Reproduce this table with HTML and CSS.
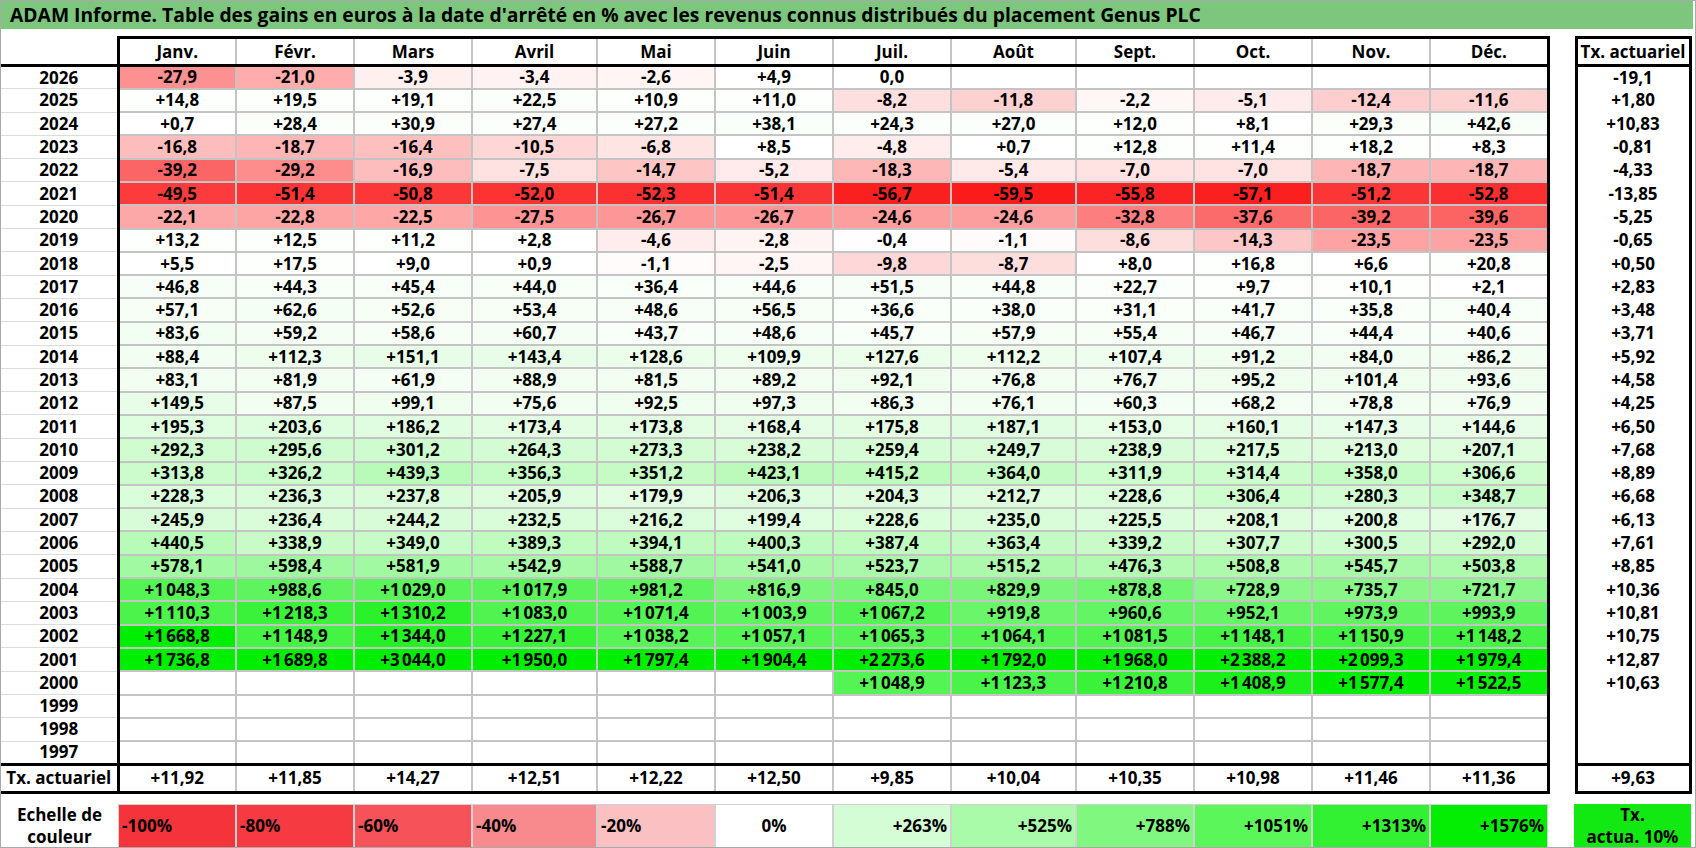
FILE: index.html
```html
<!DOCTYPE html>
<html lang="fr">
<head>
<meta charset="utf-8">
<title>ADAM Informe - Genus PLC</title>
<link rel="stylesheet" href="styles.css">
</head>
<body>
<div class="page">
  <div class="title">ADAM Informe. Table des gains en euros à la date d'arrêté en % avec les revenus connus distribués du placement Genus PLC</div>
  <div class="tables">
    <table class="grid" id="grid">
      <colgroup>
        <col class="c-label"><col class="c-m"><col class="c-m"><col class="c-m"><col class="c-w"><col class="c-m"><col class="c-m"><col class="c-m"><col class="c-w"><col class="c-m"><col class="c-m"><col class="c-m"><col class="c-m">
      </colgroup>
      <thead>
        <tr><th class="corner"></th><th>Janv.</th><th>Févr.</th><th>Mars</th><th>Avril</th><th>Mai</th><th>Juin</th><th>Juil.</th><th>Août</th><th>Sept.</th><th>Oct.</th><th>Nov.</th><th>Déc.</th></tr>
      </thead>
      <tbody>
        <tr><th>2026</th><td>-27,9</td><td class="sel">-21,0</td><td>-3,9</td><td>-3,4</td><td>-2,6</td><td>+4,9</td><td>0,0</td><td></td><td></td><td></td><td></td><td></td></tr>
        <tr><th>2025</th><td>+14,8</td><td>+19,5</td><td>+19,1</td><td>+22,5</td><td>+10,9</td><td>+11,0</td><td>-8,2</td><td>-11,8</td><td>-2,2</td><td>-5,1</td><td>-12,4</td><td>-11,6</td></tr>
        <tr><th>2024</th><td>+0,7</td><td>+28,4</td><td>+30,9</td><td>+27,4</td><td>+27,2</td><td>+38,1</td><td>+24,3</td><td>+27,0</td><td>+12,0</td><td>+8,1</td><td>+29,3</td><td>+42,6</td></tr>
        <tr><th>2023</th><td>-16,8</td><td>-18,7</td><td>-16,4</td><td>-10,5</td><td>-6,8</td><td>+8,5</td><td>-4,8</td><td>+0,7</td><td>+12,8</td><td>+11,4</td><td>+18,2</td><td>+8,3</td></tr>
        <tr><th>2022</th><td>-39,2</td><td>-29,2</td><td>-16,9</td><td>-7,5</td><td>-14,7</td><td>-5,2</td><td>-18,3</td><td>-5,4</td><td>-7,0</td><td>-7,0</td><td>-18,7</td><td>-18,7</td></tr>
        <tr><th>2021</th><td>-49,5</td><td>-51,4</td><td>-50,8</td><td>-52,0</td><td>-52,3</td><td>-51,4</td><td>-56,7</td><td>-59,5</td><td>-55,8</td><td>-57,1</td><td>-51,2</td><td>-52,8</td></tr>
        <tr><th>2020</th><td>-22,1</td><td>-22,8</td><td>-22,5</td><td>-27,5</td><td>-26,7</td><td>-26,7</td><td>-24,6</td><td>-24,6</td><td>-32,8</td><td>-37,6</td><td>-39,2</td><td>-39,6</td></tr>
        <tr><th>2019</th><td>+13,2</td><td>+12,5</td><td>+11,2</td><td>+2,8</td><td>-4,6</td><td>-2,8</td><td>-0,4</td><td>-1,1</td><td>-8,6</td><td>-14,3</td><td>-23,5</td><td>-23,5</td></tr>
        <tr><th>2018</th><td>+5,5</td><td>+17,5</td><td>+9,0</td><td>+0,9</td><td>-1,1</td><td>-2,5</td><td>-9,8</td><td>-8,7</td><td>+8,0</td><td>+16,8</td><td>+6,6</td><td>+20,8</td></tr>
        <tr><th>2017</th><td>+46,8</td><td>+44,3</td><td>+45,4</td><td>+44,0</td><td>+36,4</td><td>+44,6</td><td>+51,5</td><td>+44,8</td><td>+22,7</td><td>+9,7</td><td>+10,1</td><td>+2,1</td></tr>
        <tr><th>2016</th><td>+57,1</td><td>+62,6</td><td>+52,6</td><td>+53,4</td><td>+48,6</td><td>+56,5</td><td>+36,6</td><td>+38,0</td><td>+31,1</td><td>+41,7</td><td>+35,8</td><td>+40,4</td></tr>
        <tr><th>2015</th><td>+83,6</td><td>+59,2</td><td>+58,6</td><td>+60,7</td><td>+43,7</td><td>+48,6</td><td>+45,7</td><td>+57,9</td><td>+55,4</td><td>+46,7</td><td>+44,4</td><td>+40,6</td></tr>
        <tr><th>2014</th><td>+88,4</td><td>+112,3</td><td>+151,1</td><td>+143,4</td><td>+128,6</td><td>+109,9</td><td>+127,6</td><td>+112,2</td><td>+107,4</td><td>+91,2</td><td>+84,0</td><td>+86,2</td></tr>
        <tr><th>2013</th><td>+83,1</td><td>+81,9</td><td>+61,9</td><td>+88,9</td><td>+81,5</td><td>+89,2</td><td>+92,1</td><td>+76,8</td><td>+76,7</td><td>+95,2</td><td>+101,4</td><td>+93,6</td></tr>
        <tr><th>2012</th><td>+149,5</td><td>+87,5</td><td>+99,1</td><td>+75,6</td><td>+92,5</td><td>+97,3</td><td>+86,3</td><td>+76,1</td><td>+60,3</td><td>+68,2</td><td>+78,8</td><td>+76,9</td></tr>
        <tr><th>2011</th><td>+195,3</td><td>+203,6</td><td>+186,2</td><td>+173,4</td><td>+173,8</td><td>+168,4</td><td>+175,8</td><td>+187,1</td><td>+153,0</td><td>+160,1</td><td>+147,3</td><td>+144,6</td></tr>
        <tr><th>2010</th><td>+292,3</td><td>+295,6</td><td>+301,2</td><td>+264,3</td><td>+273,3</td><td>+238,2</td><td>+259,4</td><td>+249,7</td><td>+238,9</td><td>+217,5</td><td>+213,0</td><td>+207,1</td></tr>
        <tr><th>2009</th><td>+313,8</td><td>+326,2</td><td>+439,3</td><td>+356,3</td><td>+351,2</td><td>+423,1</td><td>+415,2</td><td>+364,0</td><td>+311,9</td><td>+314,4</td><td>+358,0</td><td>+306,6</td></tr>
        <tr><th>2008</th><td>+228,3</td><td>+236,3</td><td>+237,8</td><td>+205,9</td><td>+179,9</td><td>+206,3</td><td>+204,3</td><td>+212,7</td><td>+228,6</td><td>+306,4</td><td>+280,3</td><td>+348,7</td></tr>
        <tr><th>2007</th><td>+245,9</td><td>+236,4</td><td>+244,2</td><td>+232,5</td><td>+216,2</td><td>+199,4</td><td>+228,6</td><td>+235,0</td><td>+225,5</td><td>+208,1</td><td>+200,8</td><td>+176,7</td></tr>
        <tr><th>2006</th><td>+440,5</td><td>+338,9</td><td>+349,0</td><td>+389,3</td><td>+394,1</td><td>+400,3</td><td>+387,4</td><td>+363,4</td><td>+339,2</td><td>+307,7</td><td>+300,5</td><td>+292,0</td></tr>
        <tr><th>2005</th><td>+578,1</td><td>+598,4</td><td>+581,9</td><td>+542,9</td><td>+588,7</td><td>+541,0</td><td>+523,7</td><td>+515,2</td><td>+476,3</td><td>+508,8</td><td>+545,7</td><td>+503,8</td></tr>
        <tr><th>2004</th><td>+1&#8239;048,3</td><td>+988,6</td><td>+1&#8239;029,0</td><td>+1&#8239;017,9</td><td>+981,2</td><td>+816,9</td><td>+845,0</td><td>+829,9</td><td>+878,8</td><td>+728,9</td><td>+735,7</td><td>+721,7</td></tr>
        <tr><th>2003</th><td>+1&#8239;110,3</td><td>+1&#8239;218,3</td><td>+1&#8239;310,2</td><td>+1&#8239;083,0</td><td>+1&#8239;071,4</td><td>+1&#8239;003,9</td><td>+1&#8239;067,2</td><td>+919,8</td><td>+960,6</td><td>+952,1</td><td>+973,9</td><td>+993,9</td></tr>
        <tr><th>2002</th><td>+1&#8239;668,8</td><td>+1&#8239;148,9</td><td>+1&#8239;344,0</td><td>+1&#8239;227,1</td><td>+1&#8239;038,2</td><td>+1&#8239;057,1</td><td>+1&#8239;065,3</td><td>+1&#8239;064,1</td><td>+1&#8239;081,5</td><td>+1&#8239;148,1</td><td>+1&#8239;150,9</td><td>+1&#8239;148,2</td></tr>
        <tr><th>2001</th><td>+1&#8239;736,8</td><td>+1&#8239;689,8</td><td>+3&#8239;044,0</td><td>+1&#8239;950,0</td><td>+1&#8239;797,4</td><td>+1&#8239;904,4</td><td>+2&#8239;273,6</td><td>+1&#8239;792,0</td><td>+1&#8239;968,0</td><td>+2&#8239;388,2</td><td>+2&#8239;099,3</td><td>+1&#8239;979,4</td></tr>
        <tr><th>2000</th><td></td><td></td><td></td><td></td><td></td><td></td><td>+1&#8239;048,9</td><td>+1&#8239;123,3</td><td>+1&#8239;210,8</td><td>+1&#8239;408,9</td><td>+1&#8239;577,4</td><td>+1&#8239;522,5</td></tr>
        <tr><th>1999</th><td></td><td></td><td></td><td></td><td></td><td></td><td></td><td></td><td></td><td></td><td></td><td></td></tr>
        <tr><th>1998</th><td></td><td></td><td></td><td></td><td></td><td></td><td></td><td></td><td></td><td></td><td></td><td></td></tr>
        <tr><th>1997</th><td></td><td></td><td></td><td></td><td></td><td></td><td></td><td></td><td></td><td></td><td></td><td></td></tr>
      </tbody>
      <tfoot>
        <tr><th>Tx. actuariel</th><td>+11,92</td><td>+11,85</td><td>+14,27</td><td>+12,51</td><td>+12,22</td><td>+12,50</td><td>+9,85</td><td>+10,04</td><td>+10,35</td><td>+10,98</td><td>+11,46</td><td>+11,36</td></tr>
      </tfoot>
    </table>

    <table class="txcol">
      <thead><tr><th>Tx. actuariel</th></tr></thead>
      <tbody>
        <tr><td>-19,1</td></tr>
        <tr><td>+1,80</td></tr>
        <tr><td>+10,83</td></tr>
        <tr><td>-0,81</td></tr>
        <tr><td>-4,33</td></tr>
        <tr><td>-13,85</td></tr>
        <tr><td>-5,25</td></tr>
        <tr><td>-0,65</td></tr>
        <tr><td>+0,50</td></tr>
        <tr><td>+2,83</td></tr>
        <tr><td>+3,48</td></tr>
        <tr><td>+3,71</td></tr>
        <tr><td>+5,92</td></tr>
        <tr><td>+4,58</td></tr>
        <tr><td>+4,25</td></tr>
        <tr><td>+6,50</td></tr>
        <tr><td>+7,68</td></tr>
        <tr><td>+8,89</td></tr>
        <tr><td>+6,68</td></tr>
        <tr><td>+6,13</td></tr>
        <tr><td>+7,61</td></tr>
        <tr><td>+8,85</td></tr>
        <tr><td>+10,36</td></tr>
        <tr><td>+10,81</td></tr>
        <tr><td>+10,75</td></tr>
        <tr><td>+12,87</td></tr>
        <tr><td>+10,63</td></tr>
        <tr><td></td></tr>
        <tr><td></td></tr>
        <tr><td></td></tr>
      </tbody>
      <tfoot><tr><td>+9,63</td></tr></tfoot>
    </table>
  </div>

  <div class="legend">
    <div class="lg-label">Echelle de<br>couleur</div>
    <div class="lg neg s-100">-100%</div>
    <div class="lg neg s-80">-80%</div>
    <div class="lg neg s-60">-60%</div>
    <div class="lg neg s-40">-40%</div>
    <div class="lg neg s-20">-20%</div>
    <div class="lg zero">0%</div>
    <div class="lg pos s263">+263%</div>
    <div class="lg pos s525">+525%</div>
    <div class="lg pos s788">+788%</div>
    <div class="lg pos s1051">+1051%</div>
    <div class="lg pos s1313">+1313%</div>
    <div class="lg pos s1576">+1576%</div>
    <div class="lg-gap"></div>
    <div class="lg-tx">Tx.<br>actua. 10%</div>
  </div>
</div>
<script src="script.js"></script>
</body>
</html>
```

FILE: styles.css
```css
html, body {
  margin: 0;
  padding: 0;
  background: #fff;
}

body {
  font-family: "Open Sans", "Liberation Sans", sans-serif;
  font-weight: 700;
  font-size: 17px;
  color: #000;
}

.page {
  width: 1696px;
  height: 848px;
  box-sizing: border-box;
  border: 1px solid #a9a9a9;
  overflow: hidden;
}

.title {
  height: 28px;
  line-height: 28px;
  background: #7dc67d;
  margin-right: 2px;
  padding-left: 9px;
  font-size: 19.3px;
  white-space: nowrap;
  overflow: hidden;
}

.tables {
  display: flex;
  align-items: flex-start;
  margin-top: 7px;
  gap: 25px;
}

/* main grid */
.grid {
  border-collapse: collapse;
  table-layout: fixed;
  width: 1547px;
}

.grid col.c-label { width: 117px; }
.grid col.c-m { width: 118px; }
.grid col.c-w { width: 125px; }

.grid td,
.grid th {
  padding: 0;
  line-height: 18px;
  text-align: center;
  white-space: nowrap;
  overflow: hidden;
  border: 2px solid #c4c4c4;
  font-weight: 700;
}

.grid thead tr { height: 28px; }
.grid tbody tr { height: 23.3px; }
.grid tfoot tr { height: 28px; }

.grid thead th {
  border-top: 3px solid #000;
  border-bottom: 3px solid #000;
}

.grid thead th.corner {
  border-top: none;
  border-left: none;
}

.grid tbody th {
  border-left: none;
  border-top: 1px solid #dcdcdc;
  border-bottom: 1px solid #dcdcdc;
}

.grid tr > :first-child {
  border-left: none;
  border-right: 3px solid #000;
}

.grid tr > :last-child {
  border-right: 3px solid #000;
}

.grid td.sel {
  border-left: 2px dotted #333;
}

.grid tfoot td,
.grid tfoot th {
  border-top: 3px solid #000;
  border-bottom: 3px solid #000;
}

/* yearly rate column */
.txcol {
  border-collapse: collapse;
  table-layout: fixed;
  width: 117px;
  border: 3px solid #000;
}

.txcol td,
.txcol th {
  padding: 0;
  line-height: 18px;
  text-align: center;
  white-space: nowrap;
  font-weight: 700;
}

.txcol thead tr { height: 28px; }
.txcol tbody tr { height: 23.3px; }
.txcol tfoot tr { height: 28px; }

.txcol thead th { border-bottom: 3px solid #000; }
.txcol tfoot td { border-top: 3px solid #000; }

/* colour scale legend */
.legend {
  display: grid;
  grid-template-columns: 117px repeat(3, 118px) 125px repeat(3, 118px) 125px repeat(4, 118px) 26px 117px;
  height: 42px;
  margin-top: 10px;
}

.lg-label {
  display: flex;
  align-items: center;
  justify-content: center;
  text-align: center;
  line-height: 22px;
}

.lg {
  box-sizing: border-box;
  border: 1px solid #d2d2d2;
  display: flex;
  align-items: center;
  padding: 0 3px;
}

.lg.neg { justify-content: flex-start; }
.lg.zero { justify-content: center; }
.lg.pos { justify-content: flex-end; }

.s-100 { background: #f5333b; }
.s-80 { background: #f53a41; }
.s-60 { background: #f5525a; }
.s-40 { background: #f8898c; }
.s-20 { background: #fbc0c2; }
.zero { background: #ffffff; }
.s263 { background: #d5fdd5; }
.s525 { background: #a9fba9; }
.s788 { background: #80f880; }
.s1051 { background: #5af65a; }
.s1313 { background: #32f032; }
.s1576 { background: #04ee04; }

.lg-tx {
  background: #12e812;
  display: flex;
  align-items: center;
  justify-content: center;
  text-align: center;
  line-height: 22px;
}
```

FILE: script.js
```js
(function () {
  var cells = document.querySelectorAll('#grid tbody td');
  cells.forEach(function (td) {
    var s = td.textContent.replace(/\s/g, '').replace(',', '.');
    if (!s) return;
    var v = parseFloat(s);
    if (isNaN(v)) return;
    var r, g, b, t;
    if (v < 0) {
      t = Math.min(1, -v / 58);
      r = 255 - 4 * t;
      g = 255 - 228 * t;
      b = g;
    } else {
      t = Math.min(1, v / 1576);
      r = 255 - 255 * t;
      g = 255 - 17 * t;
      b = r;
    }
    td.style.backgroundColor = 'rgb(' + Math.round(r) + ',' + Math.round(g) + ',' + Math.round(b) + ')';
  });
})();
```
